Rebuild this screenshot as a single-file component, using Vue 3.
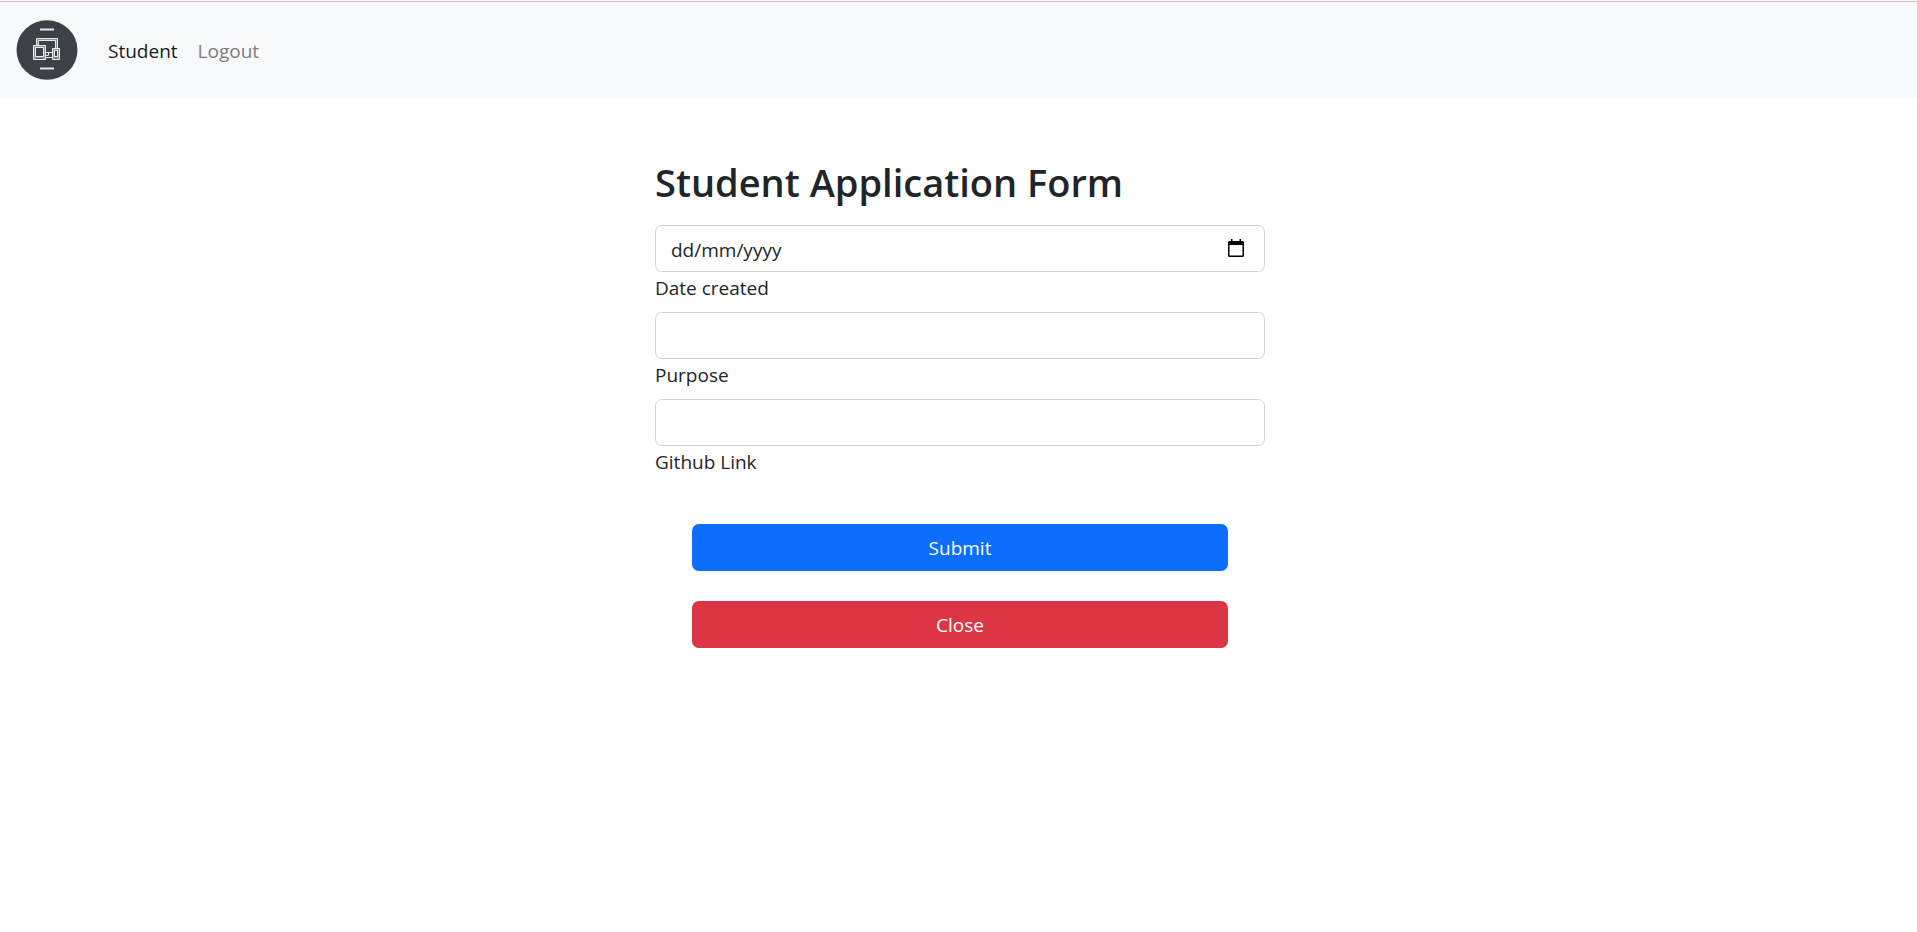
<script setup>
import { ref } from 'vue'

const dateCreated = ref('')
const purpose = ref('')
const githubLink = ref('')
const dateField = ref(null)

function focusDate() {
  dateField.value?.focus()
}

function clearForm() {
  dateCreated.value = ''
  purpose.value = ''
  githubLink.value = ''
}
</script>

<template>
  <header class="navbar">
    <a class="brand" href="#" aria-label="Home">
      <svg class="logo" viewBox="0 0 62 60" aria-hidden="true">
        <ellipse cx="31" cy="30" rx="30.5" ry="29.8" fill="#3c4047" />
        <path d="M24 9.500h14M24 48.500h14" stroke="#e8e8e6" stroke-width="2" />
        <path d="M21.500 25V19.500h19V28" fill="none" stroke="#8b8d90" stroke-width="2" />
        <g fill="none" stroke="#e6e6e4" stroke-width="1">
          <path d="M20.500 25.500V18.500h21V28M22.500 25.500V20.500h17V28" />
          <path d="M30 32.500h6M30 37.500h6M30 35.500h2.500v-3" />
        </g>
        <g fill="#3c4047" stroke="#8b8d90" stroke-width="3">
          <path d="M18.500 26.500h10v12h-10zM37.500 29.500h5v9h-5z" />
        </g>
        <g fill="none" stroke="#eeeeec" stroke-width="1">
          <path d="M17.500 25.500h12v14h-12zM19.500 27.500h8v9h-8z" />
          <path d="M36.500 28.500h7v11h-7zM38.500 30.500h3v6h-3z" />
        </g>
        <path d="M20 38.500h7M39 38.500h2" stroke="#5b5e63" stroke-width="1" />
      </svg>
    </a>
    <nav class="links">
      <a class="link active" href="#">Student</a>
      <a class="link" href="#">Logout</a>
    </nav>
  </header>

  <main class="page">
    <form class="form" @submit.prevent>
      <h1 class="title">Student Application Form</h1>

      <div class="field">
        <div class="date-box">
          <input
            id="date-created"
            ref="dateField"
            v-model="dateCreated"
            class="control"
            type="text"
            placeholder="dd/mm/yyyy"
          />
          <button class="picker" type="button" aria-label="Choose date" @click="focusDate">
            <svg viewBox="0 0 16 18" aria-hidden="true">
              <path d="M3 0h1.500v2h7V0H13v2h1.500A1.500 1.500 0 0 1 16 3.500v13a1.500 1.500 0 0 1-1.500 1.500h-13A1.500 1.500 0 0 1 0 16.500v-13A1.500 1.500 0 0 1 1.500 2H3zM1.500 6v10.500h13V6z" />
            </svg>
          </button>
        </div>
        <label class="label" for="date-created">Date created</label>
      </div>

      <div class="field">
        <input id="purpose" v-model="purpose" class="control" type="text" />
        <label class="label" for="purpose">Purpose</label>
      </div>

      <div class="field">
        <input id="github-link" v-model="githubLink" class="control" type="text" />
        <label class="label" for="github-link">Github Link</label>
      </div>

      <div class="actions">
        <button class="btn submit" type="submit">Submit</button>
        <button class="btn close" type="button" @click="clearForm">Close</button>
      </div>
    </form>
  </main>
</template>

<style>
body {
  margin: 0;
  background: #fff;
  color: #212529;
  font-family: "Segoe UI", "Open Sans", "Noto Sans", sans-serif;
  font-size: 19px;
  line-height: 30px;
}
</style>

<style scoped>
.navbar {
  display: flex;
  align-items: center;
  gap: 20px;
  padding: 18px 16px 17px;
  background: #f8f9fb;
  border-top: 1px solid #d6c3cc;
  box-shadow: 0 -1px #fdf3f7;
  margin-top: 1px;
}

.brand,
.logo {
  display: block;
}

.logo {
  width: 62px;
  height: 60px;
}

.links {
  display: flex;
}

.link {
  padding: 12px 10px 10px;
  color: #7c7d7d;
  text-decoration: none;
}

.link.active {
  color: #17181a;
}

.page {
  padding: 60px 0 60px 3px;
}

.form {
  max-width: 610px;
  margin: 0 auto;
}

.title {
  margin: 0 0 18px;
  font-size: 38px;
  font-weight: 600;
  line-height: 50px;
}

.field {
  margin-bottom: 8px;
}

.date-box {
  position: relative;
}

.control {
  display: block;
  box-sizing: border-box;
  width: 100%;
  height: 47px;
  padding: 9px 15px 7px;
  border: 1px solid #ced4da;
  border-radius: 7px;
  background: #fff;
  color: #212529;
  font: inherit;
}

.control::placeholder {
  color: #212529;
  opacity: 1;
}

.picker {
  position: absolute;
  top: 14px;
  right: 21px;
  padding: 0;
  border: 0;
  background: none;
  cursor: pointer;
}

.picker svg {
  display: block;
  width: 16px;
  height: 18px;
}

.label {
  display: block;
  line-height: 32px;
}

.actions {
  display: grid;
  gap: 30px;
  margin: 46px 37px 0;
}

.btn {
  height: 47px;
  padding: 0 15px;
  border: 0;
  border-radius: 7px;
  color: #fff;
  font: inherit;
  cursor: pointer;
}

.submit {
  background: #0d6efd;
}

.close {
  background: #dc3545;
}
</style>
